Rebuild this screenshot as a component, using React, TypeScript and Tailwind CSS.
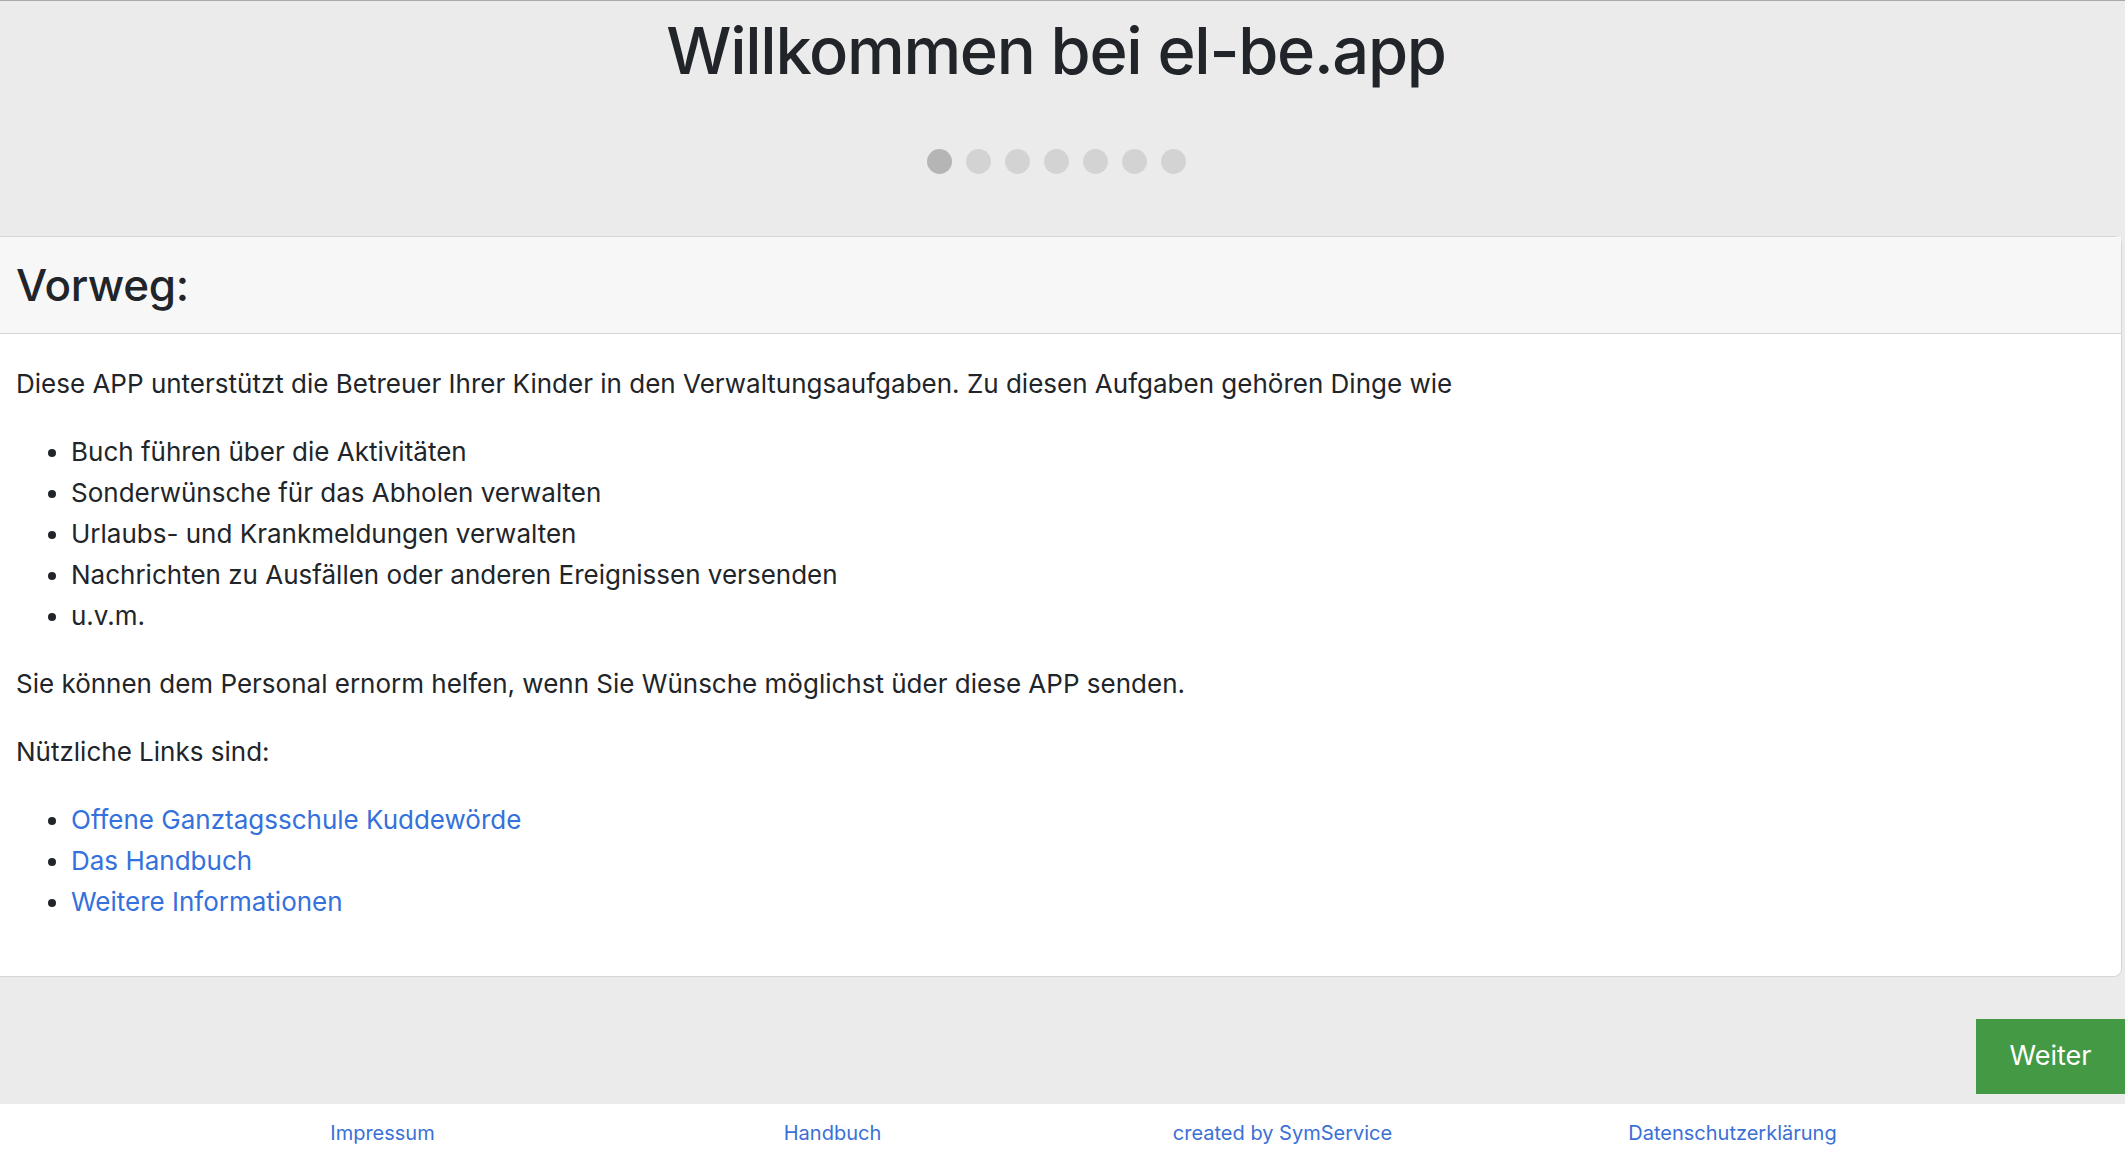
import React from 'react';

const App = () => {
  const duties = [
    'Buch führen über die Aktivitäten',
    'Sonderwünsche für das Abholen verwalten',
    'Urlaubs- und Krankmeldungen verwalten',
    'Nachrichten zu Ausfällen oder anderen Ereignissen versenden',
    'u.v.m.',
  ];

  const links = ['Offene Ganztagsschule Kuddewörde', 'Das Handbuch', 'Weitere Informationen'];

  const footer = ['Impressum', 'Handbuch', 'created by SymService', 'Datenschutzerklärung'];

  return (
    <div className="min-h-screen flex flex-col bg-white text-[#212529] font-['Inter','Noto_Sans',sans-serif]">
      {/* Header with title and step dots */}
      <div className="bg-[#ebebeb] border-t border-[#a8a8a8]">
        <div className="flex flex-col items-center pt-[11px] pb-[62px] pr-[13px]">
          <h1 className="text-[65px] leading-[1.2] font-medium tracking-[-1.3px]">Willkommen bei el-be.app</h1>
          <div className="flex gap-[14px] mt-[59px]">
            {[0, 1, 2, 3, 4, 5, 6].map((i) => (
              <span
                key={i}
                className={`w-[25px] h-[25px] rounded-full ${i === 0 ? 'bg-[#b5b5b5]' : 'bg-[#d3d3d3]'}`}
              />
            ))}
          </div>
        </div>

        {/* Card */}
        <div className="bg-white border-y border-r border-[#d6d6d6] rounded-r-[8px] mr-[3px]">
          <div className="bg-[#f7f7f7] border-b border-[#d6d6d6] h-[97px] flex items-center px-[16px]">
            <h2 className="text-[44px] font-medium leading-none tracking-[-0.3px]">Vorweg:</h2>
          </div>
          <div className="px-[16px] pt-[29px] pb-[27px] text-[26px] leading-[41px]">
            <p className="mb-[27px]">
              Diese APP unterstützt die Betreuer Ihrer Kinder in den Verwaltungsaufgaben. Zu diesen Aufgaben gehören Dinge wie
            </p>
            <ul className="list-disc pl-[55px] mb-[27px]">
              {duties.map((d) => (
                <li key={d}>{d}</li>
              ))}
            </ul>
            <p className="mb-[27px]">
              Sie können dem Personal ernorm helfen, wenn Sie Wünsche möglichst üder diese APP senden.
            </p>
            <p className="mb-[27px]">Nützliche Links sind:</p>
            <ul className="list-disc pl-[55px] mb-[27px]">
              {links.map((l) => (
                <li key={l}>
                  <a href="#" className="text-[#3471dc]">{l}</a>
                </li>
              ))}
            </ul>
          </div>
        </div>

        {/* Actions */}
        <div className="flex justify-end pt-[42px] pb-[10px]">
          <button className="w-[149px] h-[75px] bg-[#449a44] text-white text-[27px]">Weiter</button>
        </div>
      </div>

      {/* Footer */}
      <div className="flex-1 bg-white">
        <div className="mx-auto w-[1800px] -translate-x-[5px] grid grid-cols-4 pt-[14px] text-[20px] text-[#3a70d6]">
          {footer.map((f) => (
            <a key={f} href="#" className="text-center">{f}</a>
          ))}
        </div>
      </div>
    </div>
  );
};

export default App;
